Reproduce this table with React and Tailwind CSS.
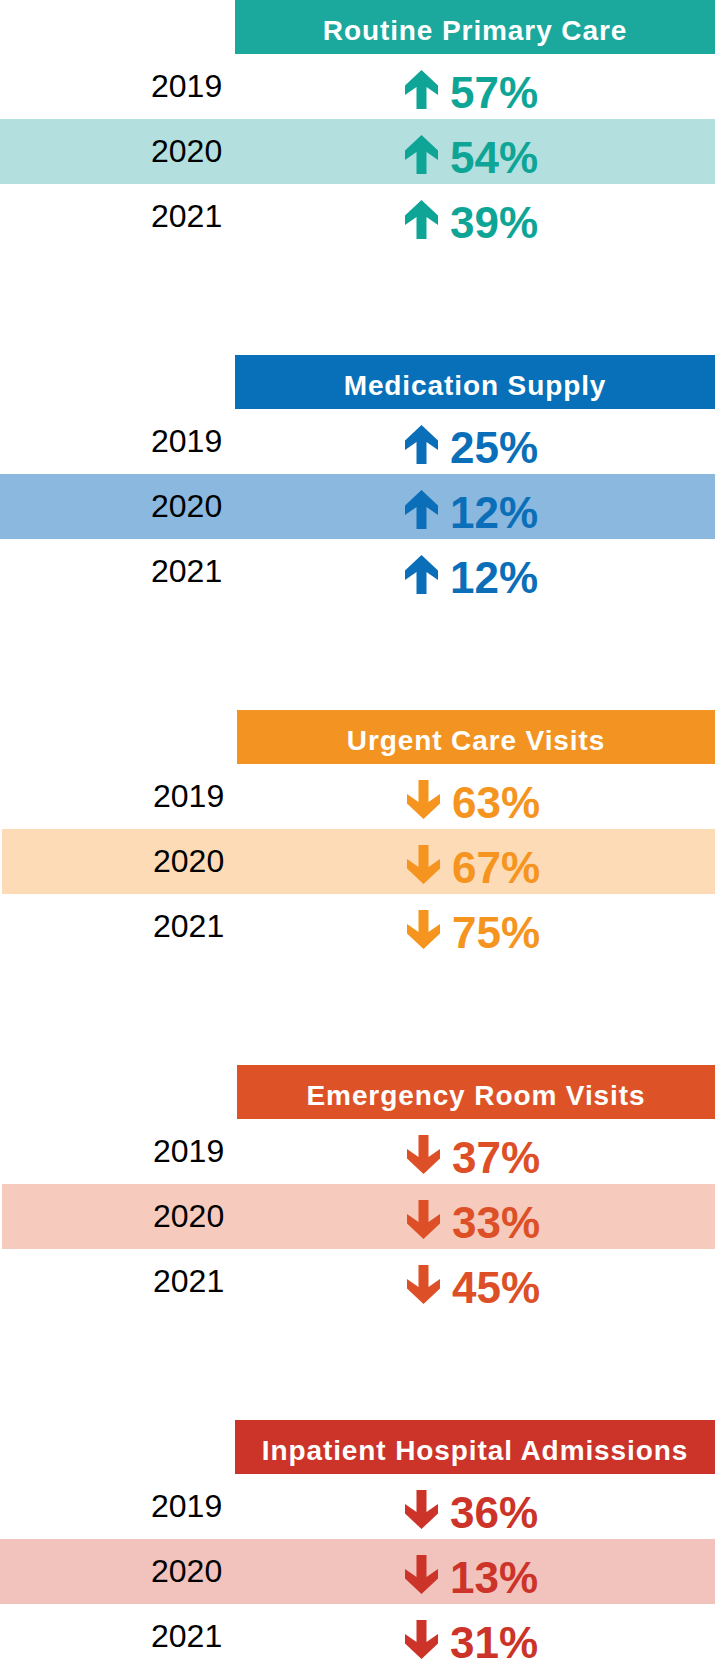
import React from "react";

const sections = [
  {
    title: "Routine Primary Care",
    header: "bg-[#1ba89d]",
    text: "text-[#0fa596]",
    fill: "#0fa596",
    band: "bg-[#b3e0df]",
    up: true,
    shift: "",
    values: ["57%", "54%", "39%"],
  },
  {
    title: "Medication Supply",
    header: "bg-[#0870b8]",
    text: "text-[#0a6fb8]",
    fill: "#0a6fb8",
    band: "bg-[#8ab8de]",
    up: true,
    shift: "",
    values: ["25%", "12%", "12%"],
  },
  {
    title: "Urgent Care Visits",
    header: "bg-[#f39422]",
    text: "text-[#f5941f]",
    fill: "#f5941f",
    band: "bg-[#fddbb6]",
    up: false,
    shift: "pl-[2px]",
    values: ["63%", "67%", "75%"],
  },
  {
    title: "Emergency Room Visits",
    header: "bg-[#dd5327]",
    text: "text-[#dd5027]",
    fill: "#dd5027",
    band: "bg-[#f6cbbd]",
    up: false,
    shift: "pl-[2px]",
    values: ["37%", "33%", "45%"],
  },
  {
    title: "Inpatient Hospital Admissions",
    header: "bg-[#cc3329]",
    text: "text-[#cc3329]",
    fill: "#cc3329",
    band: "bg-[#f2c3bd]",
    up: false,
    shift: "",
    values: ["36%", "13%", "31%"],
  },
];

const years = ["2019", "2020", "2021"];

function Arrow({ up, fill }) {
  const d =
    "M16.5 0 L33 15.5 L33 25 L21.5 17 L21.5 39 L11.5 39 L11.5 17 L0 25 L0 15.5 Z";
  return (
    <svg
      width="33"
      height="39"
      viewBox="0 0 33 39"
      className="mt-[16px] shrink-0"
      style={up ? undefined : { transform: "scaleY(-1)" }}
    >
      <path d={d} fill={fill} />
    </svg>
  );
}

function Section({ s }) {
  return (
    <div className={`mb-[106px] ${s.shift}`}>
      <div
        className={`ml-[235px] h-[54px] pt-[8px] text-center text-[28px] leading-[46px] font-bold tracking-[0.9px] text-white ${s.header}`}
      >
        {s.title}
      </div>
      {years.map((y, i) => (
        <div
          key={y}
          className={`flex h-[65px] items-start ${i === 1 ? s.band : ""}`}
        >
          <div className="ml-[151px] mt-[16px] w-[254px] text-[32px] leading-[32px] text-black">
            {y}
          </div>
          <Arrow up={s.up} fill={s.fill} />
          <div
            className={`ml-[12px] mt-[17px] text-[44px] leading-[44px] font-bold ${s.text}`}
          >
            {s.values[i]}
          </div>
        </div>
      ))}
    </div>
  );
}

export default function App() {
  return (
    <div className="min-h-[1680px] w-[715px] bg-white font-['Liberation_Sans',Arial,sans-serif]">
      {sections.map((s) => (
        <Section key={s.title} s={s} />
      ))}
    </div>
  );
}
